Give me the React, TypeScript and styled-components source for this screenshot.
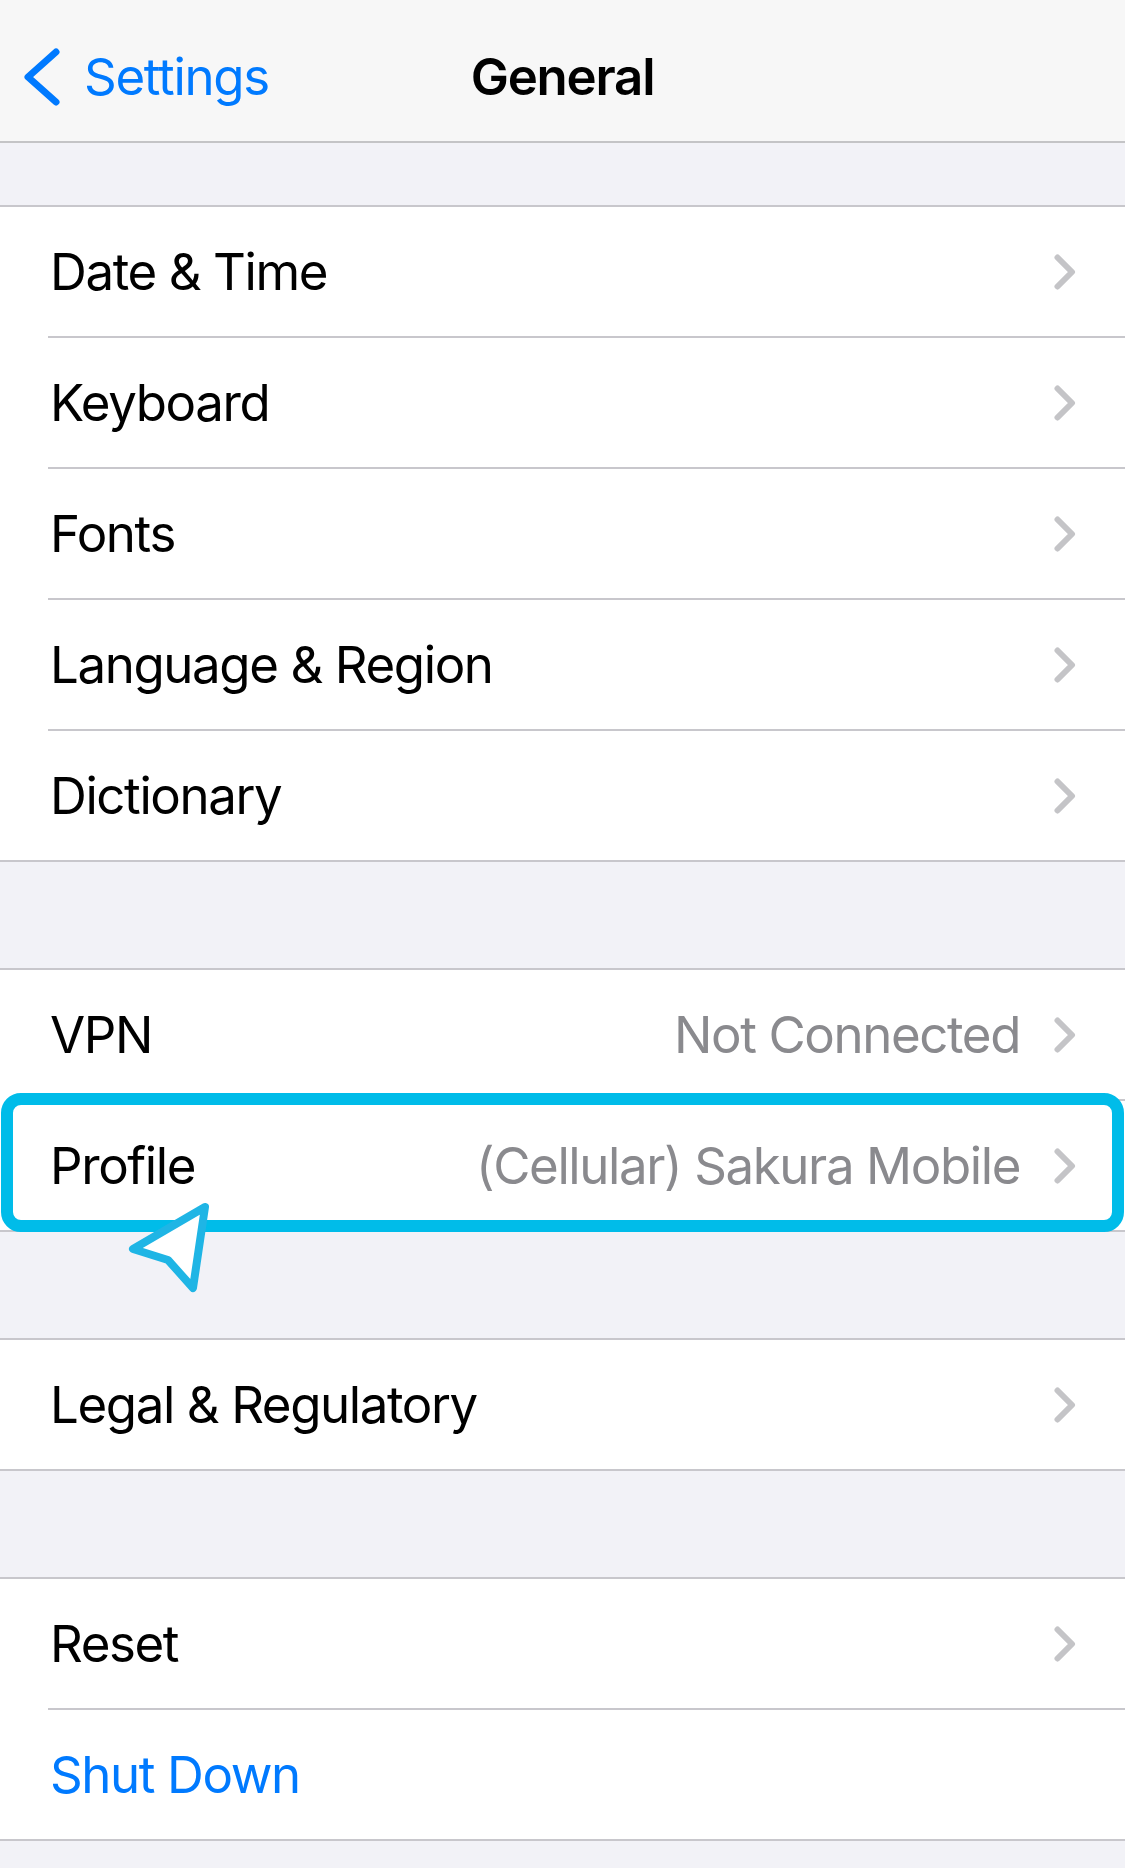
import React from "react";
import styled, { createGlobalStyle } from "styled-components";

const GlobalStyle = createGlobalStyle`
  html, body {
    margin: 0;
    padding: 0;
    background: #f2f2f7;
  }
  body {
    font-family: Inter, "Noto Sans", "Liberation Sans", sans-serif;
    -webkit-font-smoothing: antialiased;
  }
`;

const Page = styled.div`
  width: 1125px;
  min-height: 1868px;
  background: #f2f2f7;
  display: flex;
  flex-direction: column;
`;

const NavBar = styled.header`
  height: 141px;
  box-sizing: content-box;
  background: #f7f7f7;
  border-bottom: 2px solid #c4c4c6;
  display: grid;
  grid-template-columns: 1fr auto 1fr;
  align-items: center;
`;

const BackButton = styled.div`
  display: flex;
  align-items: center;
  gap: 21px;
  padding-left: 23px;
  padding-top: 12px;
  color: #007aff;
  font-size: 51px;
  letter-spacing: -1.3px;
`;

const Title = styled.div`
  font-size: 51px;
  font-weight: 600;
  letter-spacing: -1.2px;
  color: #000;
  padding-top: 12px;
`;

const Group = styled.section<{ $gap: number }>`
  margin-top: ${(p) => p.$gap}px;
  background: #fff;
  border-top: 2px solid #c8c7cc;
  border-bottom: 2px solid #c8c7cc;
  display: flex;
  flex-direction: column;
`;

const Row = styled.div`
  position: relative;
  padding-left: 48px;
  display: flex;
`;

const RowBody = styled.div<{ $last: boolean }>`
  flex: 1;
  height: 129px;
  display: flex;
  align-items: center;
  padding-right: 49px;
  border-bottom: ${(p) => (p.$last ? "none" : "2px solid #c8c7cc")};
`;

const Label = styled.span<{ $action?: boolean }>`
  flex: 1;
  font-size: 51px;
  letter-spacing: -1.4px;
  color: ${(p) => (p.$action ? "#007aff" : "#000")};
  padding-left: 2px;
`;

const Detail = styled.span`
  font-size: 51px;
  letter-spacing: -1.4px;
  color: #8a8a8e;
  margin-right: 34px;
`;

const Highlight = styled.div`
  position: absolute;
  top: -8px;
  bottom: -2px;
  left: 1px;
  right: 1px;
  border: 12px solid #00bce9;
  border-radius: 20px;
  pointer-events: none;
`;

const Pointer = styled.svg`
  position: absolute;
  left: 120px;
  top: 94px;
  width: 100px;
  height: 105px;
  overflow: visible;
`;

const Chevron = () => (
  <svg width="22" height="36" viewBox="0 0 22 36">
    <path
      d="M3.5 3.5 L18 18 L3.5 32.5"
      fill="none"
      stroke="#c4c4c7"
      strokeWidth="6"
      strokeLinecap="round"
      strokeLinejoin="round"
    />
  </svg>
);

const BackChevron = () => (
  <svg width="40" height="58" viewBox="0 0 40 58">
    <path
      d="M33 4 L5 29 L33 54"
      fill="none"
      stroke="#007aff"
      strokeWidth="7"
      strokeLinecap="round"
      strokeLinejoin="round"
    />
  </svg>
);

type Item = {
  label: string;
  detail?: string;
  action?: boolean;
  chevron?: boolean;
  highlight?: boolean;
};

const groups: { gap: number; items: Item[] }[] = [
  {
    gap: 62,
    items: [
      { label: "Date & Time", chevron: true },
      { label: "Keyboard", chevron: true },
      { label: "Fonts", chevron: true },
      { label: "Language & Region", chevron: true },
      { label: "Dictionary", chevron: true },
    ],
  },
  {
    gap: 106,
    items: [
      { label: "VPN", detail: "Not Connected", chevron: true },
      {
        label: "Profile",
        detail: "(Cellular) Sakura Mobile",
        chevron: true,
        highlight: true,
      },
    ],
  },
  {
    gap: 106,
    items: [{ label: "Legal & Regulatory", chevron: true }],
  },
  {
    gap: 106,
    items: [
      { label: "Reset", chevron: true },
      { label: "Shut Down", action: true },
    ],
  },
];

export default function App() {
  return (
    <Page>
      <GlobalStyle />
      <NavBar>
        <BackButton>
          <BackChevron />
          <span>Settings</span>
        </BackButton>
        <Title>General</Title>
        <div />
      </NavBar>
      {groups.map((g, gi) => (
        <Group key={gi} $gap={g.gap}>
          {g.items.map((it, i) => (
            <Row key={it.label}>
              <RowBody $last={i === g.items.length - 1}>
                <Label $action={it.action}>{it.label}</Label>
                {it.detail && <Detail>{it.detail}</Detail>}
                {it.chevron && <Chevron />}
              </RowBody>
              {it.highlight && (
                <>
                  <Highlight />
                  <Pointer viewBox="0 0 100 105">
                    <path
                      d="M85 12 L13 54 L48 65 L73 93 Z"
                      fill="#ffffff"
                      stroke="#1fb5e5"
                      strokeWidth="8"
                      strokeLinejoin="round"
                    />
                  </Pointer>
                </>
              )}
            </Row>
          ))}
        </Group>
      ))}
    </Page>
  );
}
